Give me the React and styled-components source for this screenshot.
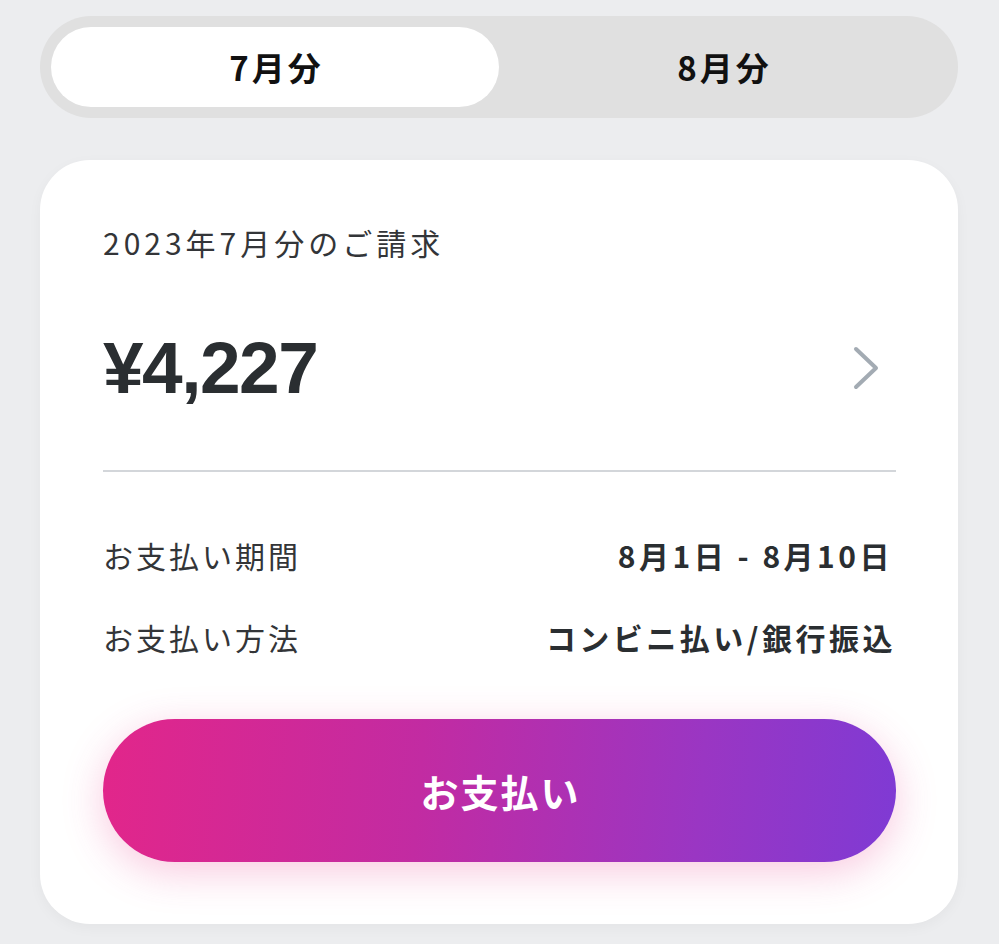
import React, { useState } from "react";
import styled, { createGlobalStyle } from "styled-components";

const Global = createGlobalStyle`
  html, body { margin: 0; padding: 0; background: #ecedef; }
  body { font-family: "Noto Sans CJK JP", "Noto Sans", sans-serif; }
  * { box-sizing: border-box; }
`;

const Page = styled.div`
  width: 999px;
  height: 944px;
  padding: 16px 41px 0 40px;
  display: flex;
  flex-direction: column;
  gap: 42px;
  overflow: hidden;
`;

const Tabs = styled.div`
  display: grid;
  grid-template-columns: 1fr 1fr;
  height: 102px;
  padding: 11px;
  background: #e0e0e0;
  border-radius: 51px;
`;

const Tab = styled.button`
  border: none;
  border-radius: 41px;
  background: ${(p) => (p.$active ? "#ffffff" : "transparent")};
  font-family: "Noto Sans CJK JP", sans-serif;
  font-weight: 700;
  font-size: 33px;
  letter-spacing: 3px;
  color: #111;
  cursor: pointer;
  padding: 0 0 0 3px;
`;

const Card = styled.div`
  background: #fff;
  border-radius: 50px;
  height: 764px;
  padding: 58px 62px 0 63px;
  display: flex;
  flex-direction: column;
  box-shadow: 0 4px 14px rgba(0, 0, 0, 0.04);
`;

const Title = styled.div`
  font-size: 30px;
  color: #333538;
  line-height: 48px;
  letter-spacing: 4px;
`;

const AmountRow = styled.div`
  display: flex;
  align-items: center;
  justify-content: space-between;
  margin-top: 60px;
  padding-bottom: 60px;
  border-bottom: 2px solid #d3d6da;
`;

const Amount = styled.div`
  font-family: "Liberation Sans", Arial, sans-serif;
  font-weight: 700;
  font-size: 73px;
  line-height: 84px;
  letter-spacing: -1.5px;
  color: #2a2e31;
`;

const Chevron = styled.svg`
  width: 28px;
  height: 46px;
  margin-right: 16px;
`;

const Rows = styled.div`
  display: flex;
  flex-direction: column;
  gap: 40px;
  margin-top: 62px;
`;

const InfoRow = styled.div`
  display: flex;
  justify-content: space-between;
  align-items: center;
  line-height: 42px;
`;

const Label = styled.span`
  font-size: 30px;
  letter-spacing: 3px;
  color: #333538;
`;

const Value = styled.span`
  font-size: 30px;
  font-weight: 700;
  letter-spacing: ${(p) => p.$ls}px;
  color: #2a2e31;
  margin-right: ${(p) => p.$mr || 0}px;
`;

const PayButton = styled.button`
  margin-top: 61px;
  height: 143px;
  width: 100%;
  border: none;
  border-radius: 72px;
  background: linear-gradient(95deg, #e2268a 0%, #c22ba2 40%, #9a36c3 75%, #7f3ad4 100%);
  box-shadow: 0 10px 40px rgba(232, 60, 140, 0.28);
  color: #fff;
  font-family: "Noto Sans CJK JP", sans-serif;
  font-weight: 700;
  font-size: 38px;
  letter-spacing: 2px;
  padding: 0 0 0 2px;
  cursor: pointer;
`;

export default function App() {
  const [tab, setTab] = useState(0);
  return (
    <>
      <Global />
      <Page>
        <Tabs>
          <Tab $active={tab === 0} onClick={() => setTab(0)}>7月分</Tab>
          <Tab $active={tab === 1} onClick={() => setTab(1)}>8月分</Tab>
        </Tabs>
        <Card>
          <Title>2023年7月分のご請求</Title>
          <AmountRow>
            <Amount>¥4,227</Amount>
            <Chevron viewBox="0 0 28 46">
              <path d="M4 4 L24 23 L4 42" fill="none" stroke="#a3abb3" strokeWidth="4" strokeLinecap="round" strokeLinejoin="round" />
            </Chevron>
          </AmountRow>
          <Rows>
            <InfoRow>
              <Label>お支払い期間</Label>
              <Value $ls={3.5} $mr={3}>8月1日 - 8月10日</Value>
            </InfoRow>
            <InfoRow>
              <Label>お支払い方法</Label>
              <Value $ls={3.5}>コンビニ払い/銀行振込</Value>
            </InfoRow>
          </Rows>
          <PayButton>お支払い</PayButton>
        </Card>
      </Page>
    </>
  );
}
